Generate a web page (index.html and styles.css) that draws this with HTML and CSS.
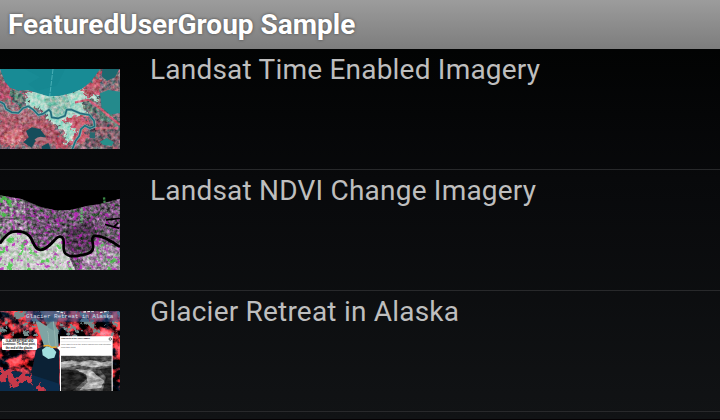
FILE: index.html
```html
<!DOCTYPE html>
<html lang="en">
<head>
<meta charset="utf-8">
<title>FeaturedUserGroup Sample</title>
<link rel="stylesheet" href="styles.css">
</head>
<body>
<header class="title-bar"><h1 class="title">FeaturedUserGroup Sample</h1></header>
<main class="list">
  <article class="row">
    <svg class="thumb" viewBox="0 0 360 240" preserveAspectRatio="none">
      <defs>
        <filter id="grain" x="0" y="0" width="100%" height="100%" color-interpolation-filters="sRGB">
          <feTurbulence type="fractalNoise" baseFrequency="0.09" numOctaves="3" seed="4" result="n"/>
          <feColorMatrix in="n" values="1 0 0 0 0  .5 .5 0 0 0  .5 .3 .2 0 0  0 0 0 0 1" result="c"/>
          <feBlend in="c" in2="SourceGraphic" mode="overlay" result="b"/>
          <feComposite in="b" in2="SourceGraphic" operator="in"/>
        </filter>
        <filter id="rough" x="-10%" y="-10%" width="120%" height="120%" color-interpolation-filters="sRGB">
          <feTurbulence type="fractalNoise" baseFrequency="0.07" numOctaves="3" seed="8"/>
          <feDisplacementMap in="SourceGraphic" scale="40" xChannelSelector="R" yChannelSelector="G"/>
        </filter>
      </defs>
      <g filter="url(#grain)">
        <rect width="360" height="240" fill="#846f78"/>
        <g filter="url(#rough)">
          <path d="M-10 10L20 50 80 65 75 105 25 95-10 105Z" fill="#b0566c"/>
          <path d="M30 65L75 63 75 110 40 100Z" fill="#607a75"/>
          <path d="M80 60L160 82 255 55 290 20 295 85 250 110 265 140 235 190 205 235 190 180 150 155 125 125 85 115Z" fill="#a8d9c9"/>
          <path d="M245 65L300 5 300 75 265 85Z" fill="#b95c6c"/>
          <path d="M0 130L60 140 125 140 160 170 180 205 145 240 90 220 20 235-10 220Z" fill="#ab5b6a"/>
          <path d="M15 190L55 180 75 205 45 230 10 225Z" fill="#cf7680"/>
          <path d="M190 155L250 130 280 165 250 220 210 240 225 180Z" fill="#c66273"/>
          <path d="M160 215L185 190 205 240 165 240Z" fill="#b44f63"/>
          <path d="M260 130L330 165 370 180 365 245 260 240Z" fill="#7a606b"/>
          <path d="M250 90L370 165 355 180 245 115Z" fill="#617f77"/>
          <path d="M0 130L80 120 130 145 80 160 20 145Z" fill="#ad707c"/>
        </g>
        <path d="M130 90L200 75 215 120 170 145 145 120Z" fill="#86b3a5" opacity=".7"/>
        <path d="M225 100L265 92 300 118 360 168" fill="none" stroke="#c95c72" stroke-width="7"/>
        <path d="M285 178L355 177" stroke="#bd6879" stroke-width="8"/>
      </g>
      <path d="M0 0H300L285 22 268 42 245 60 215 72 180 80 145 82 115 73 82 63 55 65 30 56 15 38Z" fill="#188b95"/>
      <path d="M75 0H195L170 50 110 65 85 45 120 25Z" fill="#117b87" opacity=".2"/>
      <path d="M308 0H358L345 25 322 35 305 22Z" fill="#1c6970"/>
      <path d="M300 73L325 63 360 68V132L330 137 305 115Z" fill="#248a8c"/>
      <path d="M78 186L95 175 120 180 138 203 105 218 95 236 70 220 86 205Z" fill="#164d5b"/>
      <path d="M125 232L145 222 152 240H125Z" fill="#164d5b"/>
      <path d="M300 218L320 207 342 219 335 231 310 228Z" fill="#278f8a"/>
      <path d="M270 190H285V207H270Z" fill="#286970"/>
      <path d="M107 215Q120 203 137 213" fill="none" stroke="#b47b86" stroke-width="10"/>
      <g fill="none" stroke-linejoin="round">
        <path d="M0 98L12 105 18 120 35 130 55 132 68 118 85 112 100 122 115 138 130 134 147 122 152 128 155 145 175 148 195 140 200 122 215 122 240 133 268 138 282 155 284 172 270 178 255 170 243 180 238 200 227 215 217 240" stroke="#83bdb8" stroke-width="8"/>
        <path d="M0 98L12 105 18 120 35 130 55 132 68 118 85 112 100 122 115 138 130 134 147 122 152 128 155 145 175 148 195 140 200 122 215 122 240 133 268 138 282 155 284 172 270 178 255 170 243 180 238 200 227 215 217 240" stroke="#226d7d" stroke-width="5"/>
      </g>
      <path d="M159 0L149 82" stroke="#53b7bd" stroke-width="2.5" stroke-dasharray="15 3"/>
    </svg>
    <h2 class="label">Landsat Time Enabled Imagery</h2>
  </article>
  <article class="row">
    <svg class="thumb" viewBox="0 0 360 240" preserveAspectRatio="none">
      <defs>
        <filter id="ndvi" x="0" y="0" width="100%" height="100%" color-interpolation-filters="sRGB">
          <feTurbulence type="fractalNoise" baseFrequency="0.1" numOctaves="3" seed="12"/>
          <feColorMatrix values="1.3 0 0 0 -.15  0.6 .7 0 0 -.15  1.3 0 0 0 -.15  0 0 0 0 1" result="c"/>
          <feBlend in="c" in2="SourceGraphic" mode="overlay" result="b"/>
          <feComposite in="b" in2="SourceGraphic" operator="in"/>
        </filter>
        <filter id="specks" x="0" y="0" width="100%" height="100%" color-interpolation-filters="sRGB">
          <feTurbulence type="fractalNoise" baseFrequency="0.06" numOctaves="4" seed="31"/>
          <feColorMatrix values="0 0 0 0 .72  0 0 0 0 .1  0 0 0 0 .72  8 0 0 0 -4.7" result="c"/>
          <feComposite in="c" in2="SourceGraphic" operator="in"/>
        </filter>
        <filter id="greens" x="0" y="0" width="100%" height="100%" color-interpolation-filters="sRGB">
          <feTurbulence type="fractalNoise" baseFrequency="0.05" numOctaves="4" seed="55"/>
          <feColorMatrix values="0 0 0 0 .25  0 0 0 0 .8  0 0 0 0 .25  0 9 0 0 -5.3" result="c"/>
          <feComposite in="c" in2="SourceGraphic" operator="in"/>
        </filter>
      </defs>
      <rect width="360" height="240" fill="#000"/>
      <g filter="url(#ndvi)">
        <path d="M0 16L65 27 120 50 165 61 210 60 260 48 300 42 360 26V240H0Z" fill="#6f5a72"/>
        <path d="M0 20L75 35 80 90 100 128 60 120 0 150Z" fill="#8b7b8d"/>
        <path d="M0 161L30 128 65 127 90 140 108 172 125 180 150 163 175 142 190 148 192 180 205 195 225 240H0Z" fill="#c5cdc5"/>
        <path d="M282 145L360 180V240H240L250 200 275 190Z" fill="#a292a4"/>
        <path d="M200 115L275 90 290 130 275 180 220 190 195 165Z" fill="#4f3a51"/>
      </g>
      <path d="M0 16L65 27 120 50 165 61 210 60 260 48 300 42 360 26V240H0Z" fill="#fff" filter="url(#specks)" opacity=".75"/>
      <path d="M0 16L45 27V85L0 100ZM0 165L50 125 110 180 180 145 200 195 220 240H0ZM280 150L360 185V240H290Z" fill="#fff" filter="url(#greens)" opacity=".8"/>
      <path d="M245 55V100M312 22L314 40" stroke="#59d16a" stroke-width="7" stroke-dasharray="7 3" opacity=".65"/>
      <path d="M0 87L80 83 170 117 280 120 310 70M75 30L80 90M170 65L190 128M300 45L316 80" fill="none" stroke="#49384b" stroke-width="2"/>
      <path d="M318 90L360 85M315 103L358 115M340 112L355 98" stroke="#000" stroke-width="5"/>
      <path d="M0 161C15 137 25 127 40 125S75 125 88 138 100 175 118 179 155 160 165 149 186 135 190 148 185 182 198 192 222 199 240 196 277 190 279 175 270 140 285 138 330 150 360 171" fill="none" stroke="#000" stroke-width="8"/>
    </svg>
    <h2 class="label">Landsat NDVI Change Imagery</h2>
  </article>
  <article class="row">
    <svg class="thumb" viewBox="0 0 360 240" preserveAspectRatio="none">
      <defs>
        <filter id="peaks" x="0" y="0" width="100%" height="100%" color-interpolation-filters="sRGB">
          <feTurbulence type="fractalNoise" baseFrequency="0.03 0.035" numOctaves="4" seed="7"/>
          <feColorMatrix values="0 4.4 0 0 -1.65  0 1 0.3 0 -.5  0 1 .4 0 -.51  0 0 0 0 1" result="c"/>
          <feComposite in="c" in2="SourceGraphic" operator="in"/>
        </filter>
        <filter id="snow" x="0" y="0" width="100%" height="100%" color-interpolation-filters="sRGB">
          <feTurbulence type="fractalNoise" baseFrequency="0.045" numOctaves="4" seed="17"/>
          <feColorMatrix values="0 0 0 0 .45  0 0 0 0 .55  0 0 0 0 .55  0 0 14 0 -7.7" result="c"/>
          <feComposite in="c" in2="SourceGraphic" operator="in"/>
        </filter>
        <filter id="ridge" x="-10%" y="-10%" width="120%" height="120%" color-interpolation-filters="sRGB">
          <feTurbulence type="fractalNoise" baseFrequency="0.06" numOctaves="3" seed="3"/>
          <feDisplacementMap in="SourceGraphic" scale="38" xChannelSelector="R" yChannelSelector="G"/>
        </filter>
        <filter id="photo" x="0" y="0" width="100%" height="100%" color-interpolation-filters="sRGB">
          <feTurbulence type="fractalNoise" baseFrequency="0.05 0.1" numOctaves="3" seed="9"/>
          <feColorMatrix values="0 1 0 0 0  0 1 0 0 0  0 1 0 0 0  0 0 0 0 1" result="c"/>
          <feBlend in="c" in2="SourceGraphic" mode="overlay"/>
        </filter>
      </defs>
      <rect width="360" height="240" filter="url(#peaks)"/>
      <path d="M0 0H130V75H0ZM170 0H360V80H170Z" filter="url(#snow)"/>
      <path d="M108 115L130 105 178 115V240H112L85 205 100 160Z" fill="#0b2135"/>
      <path d="M0 172L90 190 178 218V240H0Z" fill="#0b2d4d"/>
      <path d="M0 170L35 180 52 202 70 184 95 195 92 214 65 213 38 230 20 205 0 210ZM105 230L120 218 142 240H108Z" fill="#c63949" filter="url(#ridge)"/>
      <path d="M103 20L138 45 158 30 173 55 176 110 132 105 119 65Z" fill="#7fa4a3"/>
      <path d="M120 0L180 0 164 60 145 50Z" fill="#638b91" opacity=".7"/>
      <path d="M142 60C150 75 140 88 152 106M160 30L168 105" fill="none" stroke="#95b5b0" stroke-width="3"/>
      <path d="M126 116L140 106 158 110 169 123 163 140 145 144 128 133Z" fill="#a2dedd"/>
      <path d="M130 105L145 103 155 109 170 108" fill="none" stroke="#f0af2e" stroke-width="4"/>
      <path d="M77 0H360V32H77Z" fill="#28518a" opacity=".52"/>
      <path d="M170 0L195 7M250 3L282 0M300 5L325 0" stroke="#ddd" stroke-width="4" stroke-dasharray="8 4"/>
      <text class="map-title" x="78" y="21" textLength="262">Glacier Retreat in Alaska</text>
      <rect x="6" y="83" width="105" height="34" rx="3" fill="#fff"/>
      <text class="note" x="17" y="93" textLength="83" lengthAdjust="spacingAndGlyphs">GLACIER RETREAT AND</text>
      <text class="note" x="9" y="103" textLength="98" lengthAdjust="spacingAndGlyphs">Luminous: The Boot point,</text>
      <text class="note" x="17" y="113" textLength="82" lengthAdjust="spacingAndGlyphs">the end of the glacier.</text>
      <path d="M180 76H338V240H180V120L171 110 180 104Z" fill="#fff"/>
      <text class="note small" x="183" y="85" textLength="87" lengthAdjust="spacingAndGlyphs">Familiarity at the Gully (1880s)</text>
      <circle cx="331" cy="84" r="4" fill="#ccc" stroke="#444" stroke-width="2"/>
      <path d="M182 92H336" stroke="#bbb" stroke-width="1"/>
      <text class="body" x="183" y="102" textLength="149" lengthAdjust="spacingAndGlyphs">From 1880 to 1900 the Glacier shown here has retreated</text>
      <text class="body" x="183" y="110" textLength="45" lengthAdjust="spacingAndGlyphs">from this point.</text>
      <svg x="183" y="134" width="152" height="106" viewBox="0 0 152 106">
        <g filter="url(#photo)">
          <rect width="152" height="106" fill="#555"/>
          <path d="M0 0H152V17L120 12 85 20 42 13 0 20Z" fill="#444"/>
          <path d="M0 20L32 13 57 20 90 12 120 20 152 17V30L90 35 50 28 0 38Z" fill="#aaa"/>
          <path d="M0 40L50 45 80 67 35 106H0ZM152 35L115 40 135 65 125 106H152Z" fill="#252525"/>
          <path d="M40 39L93 45 104 55 130 75 120 96 55 104 80 80 75 57Z" fill="#aaa"/>
        </g>
      </svg>
    </svg>
    <h2 class="label">Glacier Retreat in Alaska</h2>
  </article>
</main>
</body>
</html>
```
FILE: styles.css
```css
* { box-sizing: border-box; }
body {
  margin: 0;
  height: 420px;
  overflow: hidden;
  display: flex;
  flex-direction: column;
  background: #101214;
  font-family: Roboto, "Liberation Sans", sans-serif;
}
.title-bar {
  height: 49px;
  flex: none;
  display: flex;
  align-items: center;
  padding-left: 8px;
  background: linear-gradient(#9c9c9c, #7d7d7d);
}
.title {
  margin: 0;
  font-size: 28px;
  line-height: 49px;
  font-weight: 700;
  color: #fff;
  white-space: nowrap;
  text-shadow: 0 0 3px #444;
}
.list {
  flex: 1;
  background: linear-gradient(#020303, #08090b 35%, #111315);
  border-bottom: 1px solid #050204;
}
.row {
  height: 121px;
  display: flex;
  align-items: flex-start;
  gap: 30px;
  border-bottom: 1px solid #28292b;
}
.thumb {
  width: 120px;
  height: 80px;
  margin-top: 20px;
  flex: none;
  display: block;
}
.label {
  margin: 4px 0 0;
  font-size: 28px;
  line-height: 33px;
  font-weight: 400;
  letter-spacing: 0.21px;
  color: #bebebe;
  white-space: nowrap;
}
.map-title { font: 18px "Liberation Mono", monospace; fill: #d6deea; }
.note { font: bold 9px "Liberation Sans", sans-serif; fill: #111; }
.small { font-size: 7px; }
.body { font: 7px "Liberation Sans", sans-serif; fill: #555; }
```
